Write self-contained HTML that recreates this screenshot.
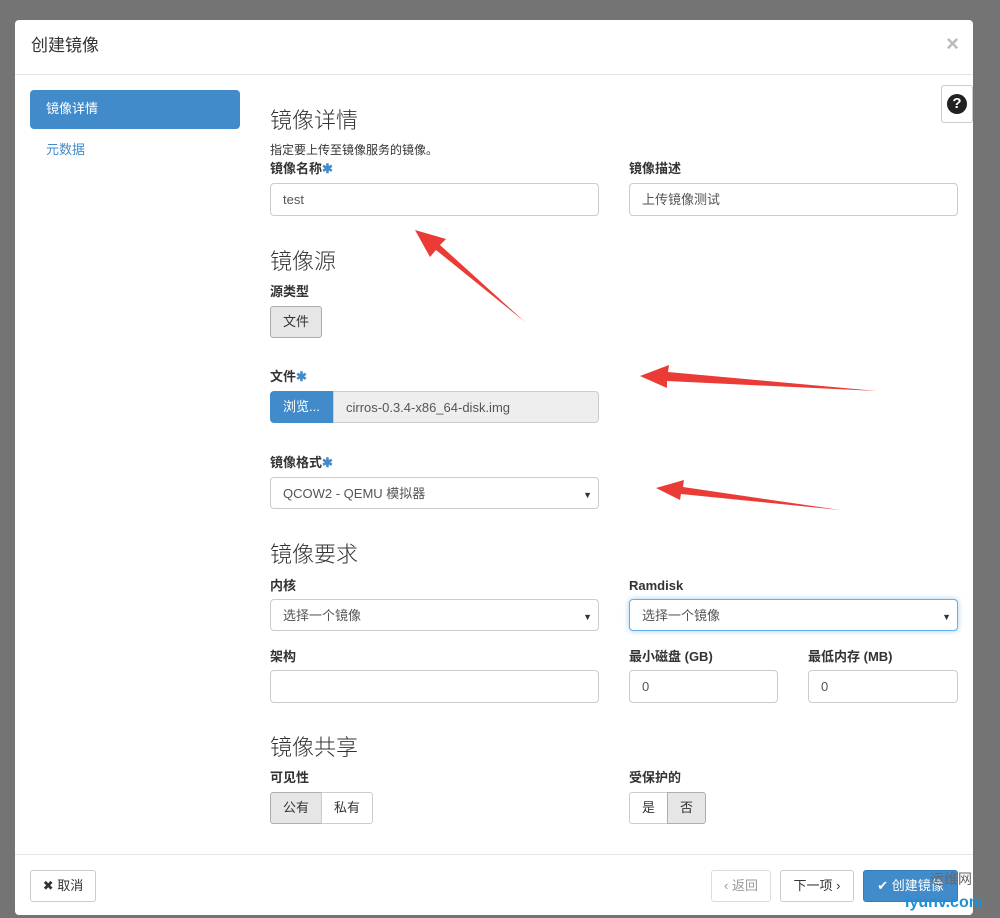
<!DOCTYPE html><html><head><meta charset="utf-8"><style>
*{box-sizing:border-box}
body{margin:0;width:1000px;height:918px;background:#747474;font-family:"Liberation Sans","Noto Sans CJK SC",sans-serif;font-size:13px;color:#333;position:relative;overflow:hidden;line-height:1.3}
.m{position:absolute;left:15px;top:20px;width:958px;height:895px;background:#fff;border-radius:4px}
.a{position:absolute}
.h3{font-size:22px;color:#333;font-weight:300}
.lb{font-weight:bold;font-size:13px;color:#333}
.st{color:#428bca}
.in{position:absolute;border:1px solid #ccc;border-radius:4px;height:33px;padding:7px 12px;line-height:17px;color:#555;font-size:13px;background:#fff}
.btn{position:absolute;border:1px solid #ccc;border-radius:3px;height:32px;text-align:center;line-height:30px;font-size:13px;background:#fff;color:#333}
.car{position:absolute;right:6px;top:9px;font-size:9px;color:#333}
</style></head><body>
<div class="m">
<div class="a" style="left:16px;top:15px;font-size:17px">创建镜像</div>
<div class="a" style="right:14px;top:10px;font-size:22px;color:#bbb;font-weight:bold">×</div>
<div class="a" style="left:0;top:54px;width:958px;border-top:1px solid #e5e5e5"></div>
<div class="a" style="left:15px;top:70px;width:210px;height:39px;background:#428bca;border-radius:4px;color:#fff;padding:11px 16px">镜像详情</div>
<div class="a" style="left:31px;top:122px;color:#428bca">元数据</div>
<div class="a" style="left:926px;top:65px;width:32px;height:38px;border:1px solid #ccc;border-radius:3px;background:#fff"><div style="margin:8px 5px;width:20px;height:20px;border-radius:50%;background:#222;color:#fff;font-weight:bold;text-align:center;line-height:20px;font-size:15px">?</div></div>
</div>
<div class="a h3" style="left:270px;top:107px">镜像详情</div>
<div class="a" style="left:270px;top:143px;font-size:12px">指定要上传至镜像服务的镜像。</div>
<div class="a lb" style="left:270px;top:161px">镜像名称<span class="st">✱</span></div>
<div class="in" style="left:270px;top:183px;width:329px">test</div>
<div class="a lb" style="left:629px;top:161px">镜像描述</div>
<div class="in" style="left:629px;top:183px;width:329px">上传镜像测试</div>
<div class="a h3" style="left:270px;top:248px">镜像源</div>
<div class="a lb" style="left:270px;top:284px">源类型</div>
<div class="btn" style="left:270px;top:306px;width:52px;background:#e6e6e6;border-color:#adadad">文件</div>
<div class="a lb" style="left:270px;top:369px">文件<span class="st">✱</span></div>
<div class="a" style="left:270px;top:391px;width:63px;height:32px;background:#428bca;color:#fff;border-radius:4px 0 0 4px;padding:7px 13px;line-height:17px">浏览...</div>
<div class="a" style="left:333px;top:391px;width:266px;height:32px;background:#eee;border:1px solid #ccc;border-radius:0 4px 4px 0;padding:7px 12px;line-height:17px;color:#555">cirros-0.3.4-x86_64-disk.img</div>
<div class="a lb" style="left:270px;top:455px">镜像格式<span class="st">✱</span></div>
<div class="in" style="left:270px;top:477px;width:329px;height:32px">QCOW2 - QEMU 模拟器<span class="car">▼</span></div>
<div class="a h3" style="left:270px;top:541px">镜像要求</div>
<div class="a lb" style="left:270px;top:578px">内核</div>
<div class="in" style="left:270px;top:599px;width:329px;height:32px">选择一个镜像<span class="car">▼</span></div>
<div class="a lb" style="left:629px;top:578px">Ramdisk</div>
<div class="in" style="left:629px;top:599px;width:329px;height:32px;border-color:#66afe9;box-shadow:0 0 6px rgba(102,175,233,.6)">选择一个镜像<span class="car">▼</span></div>
<div class="a lb" style="left:270px;top:649px">架构</div>
<div class="in" style="left:270px;top:670px;width:329px"></div>
<div class="a lb" style="left:629px;top:649px">最小磁盘 (GB)</div>
<div class="in" style="left:629px;top:670px;width:149px">0</div>
<div class="a lb" style="left:808px;top:649px">最低内存 (MB)</div>
<div class="in" style="left:808px;top:670px;width:150px">0</div>
<div class="a h3" style="left:270px;top:734px">镜像共享</div>
<div class="a lb" style="left:270px;top:770px">可见性</div>
<div class="btn" style="left:270px;top:792px;width:52px;background:#e6e6e6;border-color:#adadad;border-radius:3px 0 0 3px">公有</div>
<div class="btn" style="left:321px;top:792px;width:52px;border-radius:0 3px 3px 0">私有</div>
<div class="a lb" style="left:629px;top:770px">受保护的</div>
<div class="btn" style="left:629px;top:792px;width:39px;border-radius:3px 0 0 3px">是</div>
<div class="btn" style="left:667px;top:792px;width:39px;background:#e6e6e6;border-color:#adadad;border-radius:0 3px 3px 0">否</div>
<div class="a" style="left:15px;top:854px;width:958px;border-top:1px solid #e5e5e5"></div>
<div class="btn" style="left:30px;top:870px;width:66px">✖ 取消</div>
<div class="btn" style="left:711px;top:870px;width:60px;color:#999;border-color:#ddd">‹ 返回</div>
<div class="btn" style="left:780px;top:870px;width:74px">下一项 ›</div>
<div class="btn" style="left:863px;top:870px;width:95px;background:#428bca;border-color:#357ebd;color:#fff">✔ 创建镜像</div>
<div class="a" style="left:930px;top:870px;color:#666;font-size:14px">运维网</div>
<div class="a" style="left:905px;top:893px;color:#1e8fd6;font-size:16px;font-weight:bold">iyunv.com</div>
<svg class="a" style="left:0;top:0" width="1000" height="918">
<g fill="#ea3b36">
<polygon points="525,322 440,245 446,239 415,230 430,257 436,250"/>
<polygon points="877,391 668,372 669,365 640,376 667,388 667,381"/>
<polygon points="840,510 683,487 684,480 656,488 680,500 681,494"/>
</g></svg>
</body></html>
